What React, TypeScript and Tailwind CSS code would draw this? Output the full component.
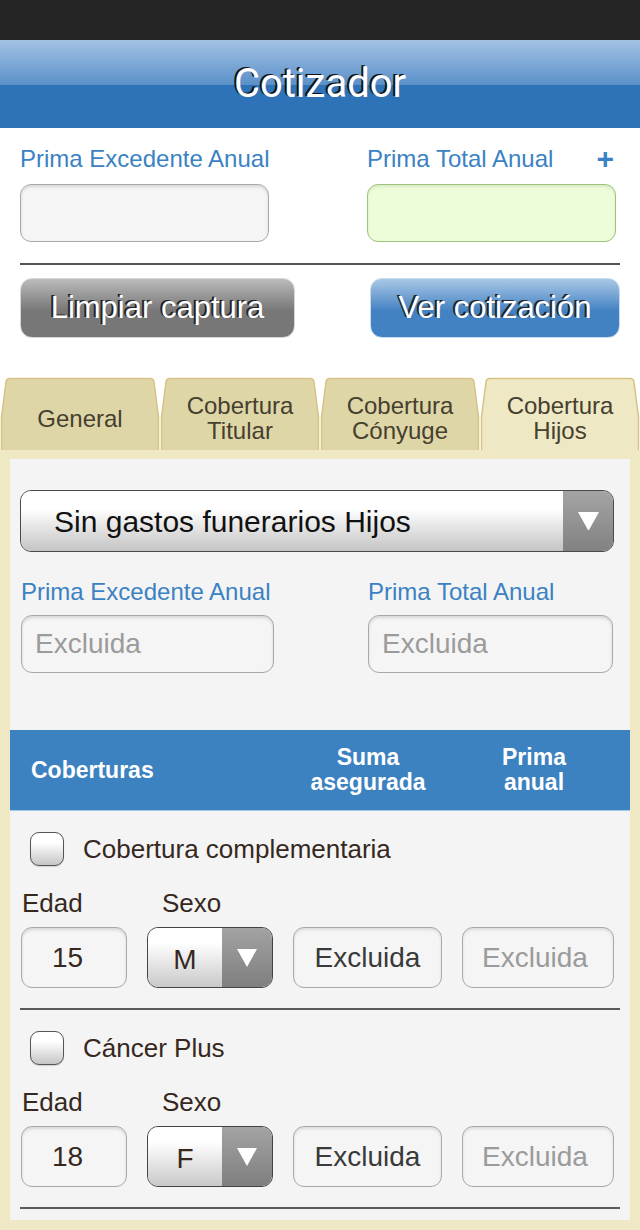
import React from 'react';

const font = 'font-["Liberation_Sans",Arial,sans-serif]';

type Tab = { id: string; lines: string[]; active?: boolean };

const tabs: Tab[] = [
  { id: 'general', lines: ['General'] },
  { id: 'titular', lines: ['Cobertura', 'Titular'] },
  { id: 'conyuge', lines: ['Cobertura', 'Cónyuge'] },
  { id: 'hijos', lines: ['Cobertura', 'Hijos'], active: true },
];

type Row = { id: string; label: string; edad: string; sexo: string };

const rows: Row[] = [
  { id: 'complementaria', label: 'Cobertura complementaria', edad: '15', sexo: 'M' },
  { id: 'cancer', label: 'Cáncer Plus', edad: '18', sexo: 'F' },
];

function Triangle({ size = 20 }: { size?: number }) {
  return (
    <svg width={size} height={size * 0.9} viewBox="0 0 20 18">
      <path d="M0 0 L20 0 L10 18 Z" fill="#ffffff" />
    </svg>
  );
}

function TabItem({ tab }: { tab: Tab }) {
  return (
    <div className="relative flex h-[73px] w-[160px] items-center justify-center pt-[9px]">
      <svg className="absolute inset-0" width="160" height="73" viewBox="0 0 160 73">
        <path
          d="M1.5 74 L1.5 40 L6 5 Q6.5 1.5 10 1.5 L150 1.5 Q153.5 1.5 154 5 L158.5 40 L158.5 74"
          fill={tab.active ? '#efe8c4' : '#dfd6a7'}
          stroke="#d9c186"
          strokeWidth="1.5"
        />
      </svg>
      <div className="relative text-center text-[24px] leading-[25px] text-[#45402f]">
        {tab.lines.map((line) => (
          <div key={line}>{line}</div>
        ))}
      </div>
    </div>
  );
}

function TextBox({ value, placeholder, className = '' }: { value?: string; placeholder?: string; className?: string }) {
  return (
    <div
      className={`flex h-[58px] items-center rounded-[11px] border border-[#a9a9a9] bg-[#f5f5f5] shadow-[inset_0_2px_3px_rgba(0,0,0,0.12)] ${className}`}
    >
      {value ? <span className="text-[#333]">{value}</span> : <span className="text-[#9b9b9b]">{placeholder}</span>}
    </div>
  );
}

function CoverageRow({ row }: { row: Row }) {
  return (
    <div className="px-[11px] pt-[21px]">
      <div className="flex items-center gap-[19px] pl-[9px]">
        <div className="h-[34px] w-[34px] rounded-[9px] border border-[#555] bg-linear-to-b from-white from-30% to-[#c6c6c6] shadow-[0_1px_1px_rgba(0,0,0,0.15)]" />
        <span className="text-[26px] leading-[26px] text-[#36281e]">{row.label}</span>
      </div>
      <div className="mt-[24px] flex text-[26px] leading-[26px] text-[#36281e]">
        <span className="w-[141px] pl-[1px]">Edad</span>
        <span>Sexo</span>
      </div>
      <div className="mt-[11px] flex h-[61px] gap-[20px] text-[28px]">
        <div className="flex h-full w-[106px] items-center rounded-[11px] border border-[#a9a9a9] bg-[#f5f5f5] pl-[30px] text-[#36281e] shadow-[inset_0_2px_3px_rgba(0,0,0,0.12)]">
          {row.edad}
        </div>
        <div className="flex h-full w-[126px] overflow-hidden rounded-[11px] border border-[#444]">
          <div className="flex flex-1 items-center justify-center bg-linear-to-b from-white from-25% to-[#c9c9c9] pt-[4px] text-[#36281e]">
            {row.sexo}
          </div>
          <div className="flex w-[50px] items-center justify-center bg-linear-to-b from-[#a3a3a3] to-[#7f7f7f]">
            <Triangle size={20} />
          </div>
        </div>
        <div className="flex h-full w-[149px] items-center justify-center rounded-[11px] border border-[#a9a9a9] bg-[#f5f5f5] text-[#3a3a3a] shadow-[inset_0_2px_3px_rgba(0,0,0,0.1)]">
          Excluida
        </div>
        <div className="flex h-full w-[152px] items-center rounded-[11px] border border-[#a9a9a9] bg-[#f5f5f5] pl-[19px] text-[#9b9b9b] shadow-[inset_0_2px_3px_rgba(0,0,0,0.1)]">
          Excluida
        </div>
      </div>
      <div className="mt-[20px] -ml-[1px] h-[2px] w-[600px] bg-[#5a5a5a]" />
    </div>
  );
}

export default function App() {
  return (
    <div className={`h-[1230px] w-[640px] overflow-hidden bg-white ${font}`}>
      <div className="h-[40px] bg-[#262526]" />

      <header className="flex h-[88px] items-center justify-center bg-[linear-gradient(to_bottom,#a4c3e3_0%,#6a9bd0_40%,#5a90c8_51%,#2e72b8_51%,#2e72b8_100%)]">
        <h1 className='font-["Roboto",sans-serif] text-[40px] leading-none text-white [text-shadow:-2px_-1px_0_#111]'>
          Cotizador
        </h1>
      </header>

      <section className="px-[20px] pt-[19px]">
        <div className="flex text-[24px] leading-[24px] text-[#3a82c3]">
          <span className="w-[347px]">Prima Excedente Anual</span>
          <span className="flex-1">Prima Total Anual</span>
          <span className="mr-[6px] text-[30px] font-bold">+</span>
        </div>
        <div className="mt-[13px] flex">
          <div className="h-[58px] w-[249px] rounded-[11px] border border-[#a9a9a9] bg-[#f5f5f5] shadow-[inset_0_2px_3px_rgba(0,0,0,0.12)]" />
          <div className="ml-[98px] h-[58px] w-[249px] rounded-[11px] border border-[#9cc47c] bg-[#edfdd9] shadow-[inset_0_2px_3px_rgba(0,0,0,0.08)]" />
        </div>
        <div className="mt-[21px] h-[2px] bg-[#555]" />
        <div className="mt-[13px] flex justify-between">
          <button className="h-[60px] w-[275px] rounded-[12px] border border-[#d6d6d6] bg-linear-to-b from-[#bcbcbc] to-[#777] to-55% text-[31px] text-white [text-shadow:-2px_-1px_0_#222]">
            Limpiar captura
          </button>
          <button className="h-[60px] w-[250px] rounded-[12px] border border-[#c6dbef] bg-linear-to-b from-[#a9c8e6] to-[#4282c2] to-55% text-[31px] text-white [text-shadow:-2px_-1px_0_#222]">
            Ver cotización
          </button>
        </div>
      </section>

      <nav className="mt-[39px] flex">
        {tabs.map((tab) => (
          <TabItem key={tab.id} tab={tab} />
        ))}
      </nav>

      <div className="bg-[#efe8c4] px-[10px] pt-[9px] pb-[10px]">
        <div className="h-[761px] bg-[#f4f4f4]">
          <div className="pt-[31px] pr-[16px] pl-[10px]">
            <div className="flex h-[62px] overflow-hidden rounded-[11px] border border-[#4a4a4a]">
              <div className="flex flex-1 items-center bg-linear-to-b from-white from-30% to-[#c4c4c4] pl-[33px] text-[30px] text-[#111]">
                Sin gastos funerarios Hijos
              </div>
              <div className="flex w-[50px] items-center justify-center bg-linear-to-b from-[#a4a4a4] to-[#828282]">
                <Triangle size={21} />
              </div>
            </div>
          </div>

          <div className="px-[11px] pt-[28px]">
            <div className="flex text-[24px] leading-[24px] text-[#3a82c3]">
              <span className="w-[347px]">Prima Excedente Anual</span>
              <span>Prima Total Anual</span>
            </div>
            <div className="mt-[11px] flex text-[28px]">
              <TextBox placeholder="Excluida" className="w-[253px] pl-[13px]" />
              <TextBox placeholder="Excluida" className="ml-[94px] w-[245px] pl-[13px]" />
            </div>
          </div>

          <div className="mt-[57px] flex h-[81px] items-center border-b border-[#a9c6e4] bg-[#3d82c0] text-[23px] leading-[25px] font-bold text-white">
            <span className="w-[283px] pl-[21px]">Coberturas</span>
            <span className="w-[150px] text-center">
              Suma
              <br />
              asegurada
            </span>
            <span className="ml-[16px] w-[150px] text-center">
              Prima
              <br />
              anual
            </span>
          </div>

          {rows.map((row) => (
            <CoverageRow key={row.id} row={row} />
          ))}
        </div>
      </div>
    </div>
  );
}
